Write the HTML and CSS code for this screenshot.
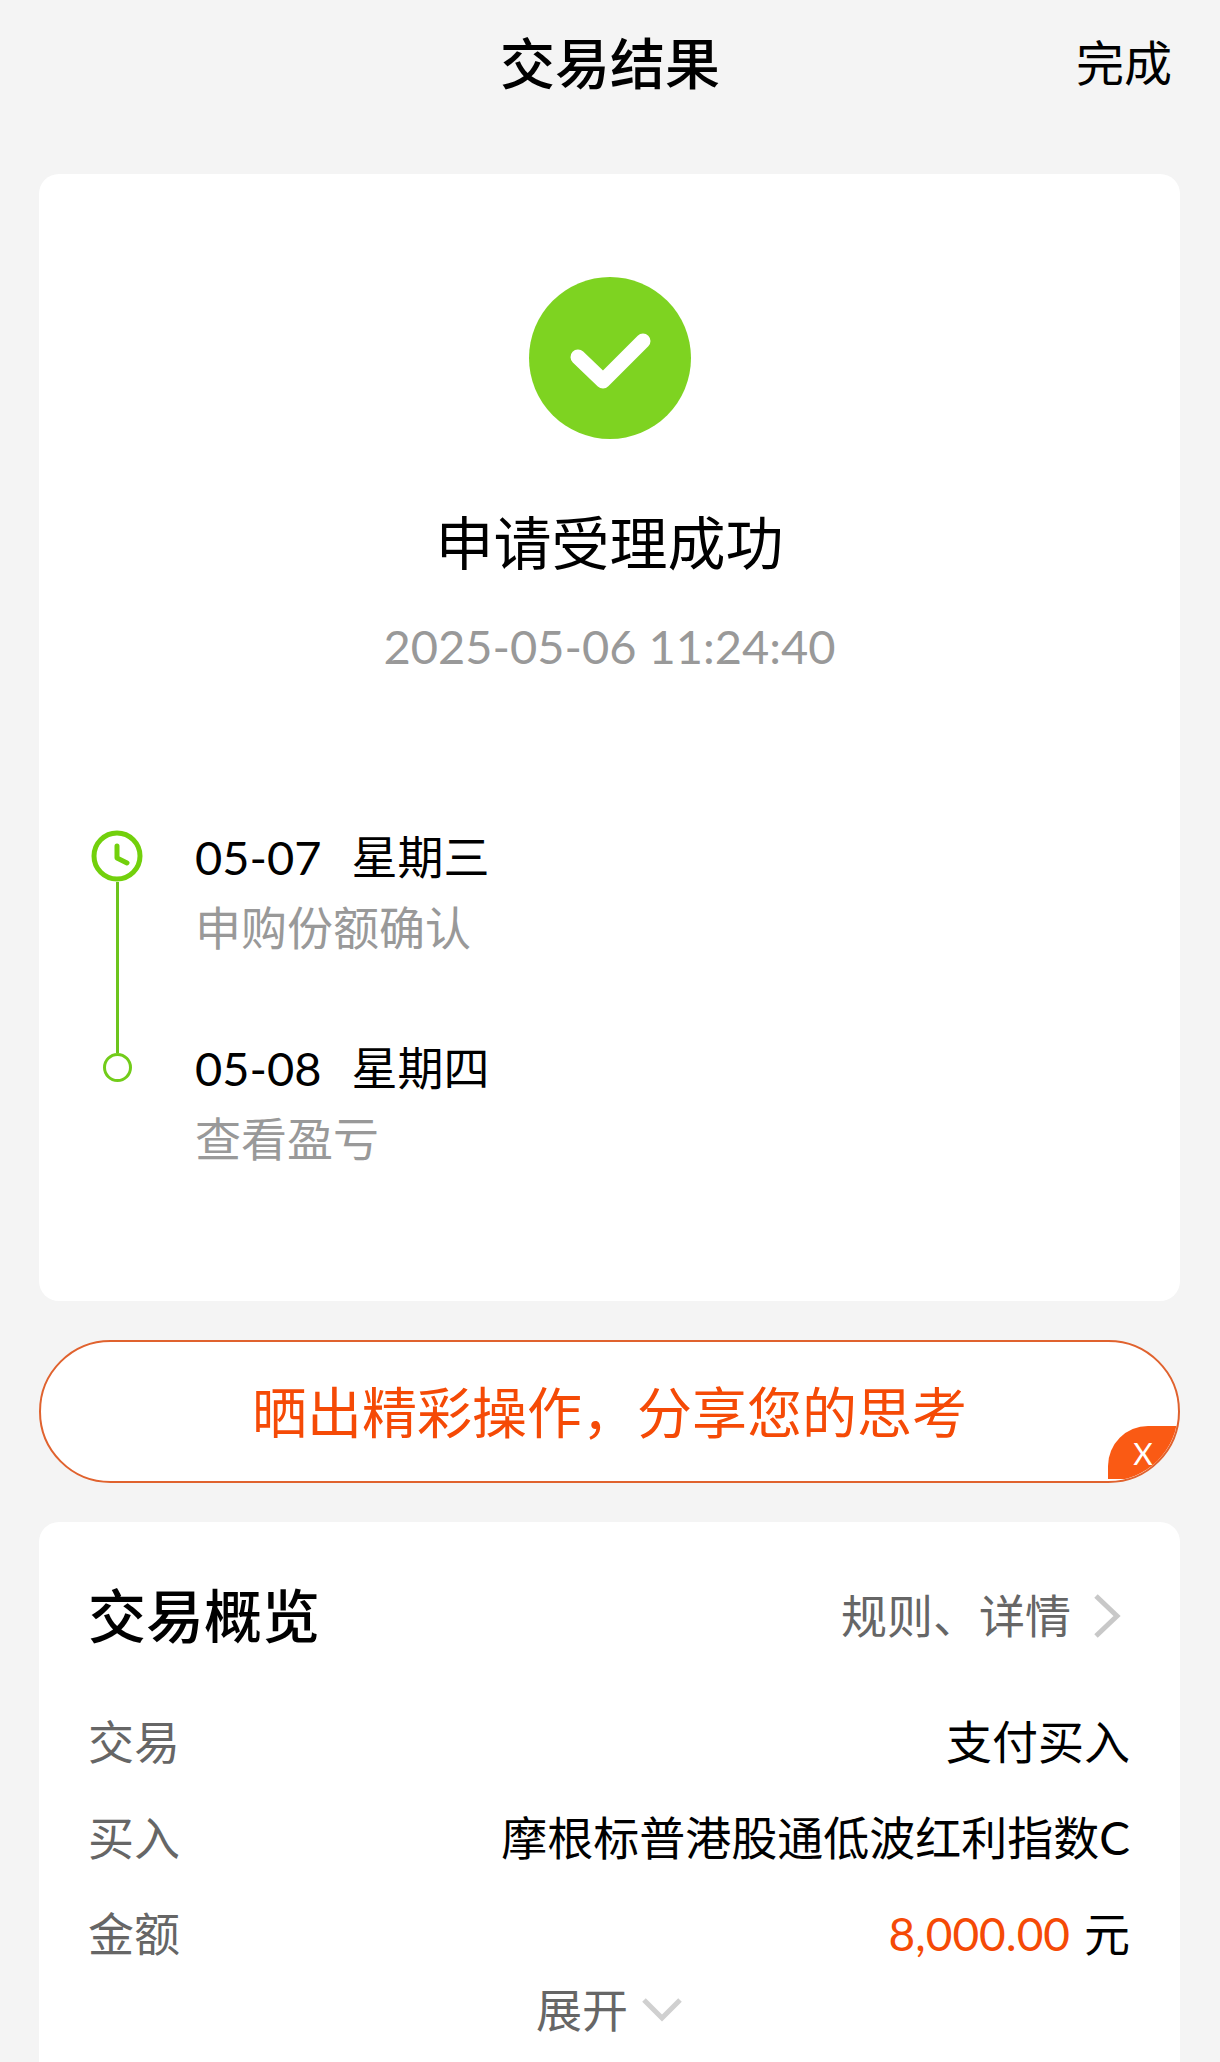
FILE: index.html
```html
<!doctype html>
<html lang="zh-CN">
<head>
<meta charset="utf-8">
<meta name="viewport" content="width=device-width">
<title>交易结果</title>
<link rel="stylesheet" href="styles.css">
</head>
<body>
<header class="topbar">
	<h1>交易结果</h1>
	<button type="button" class="done">完成</button>
</header>

<main>
	<section class="card result">
		<svg class="success" viewBox="0 0 162 162" aria-hidden="true">
			<circle cx="81" cy="81" r="81" fill="#7ed321"/>
			<path d="M49 80L74 104L114 64" fill="none" stroke="#fff" stroke-width="15" stroke-linecap="round" stroke-linejoin="round"/>
		</svg>
		<h2>申请受理成功</h2>
		<time class="stamp">2025-05-06 11:24:40</time>

		<ol class="steps">
			<li>
				<div class="marker">
					<svg class="clock" viewBox="0 0 52 52" aria-hidden="true">
						<circle cx="26" cy="26" r="23" fill="none" stroke="#72d00c" stroke-width="5"/>
						<path d="M26 16V28L36 33" fill="none" stroke="#72d00c" stroke-width="5" stroke-linecap="round" stroke-linejoin="round"/>
					</svg>
					<span class="line"></span>
				</div>
				<div>
					<p class="day"><span class="date">05-07</span><span>星期三</span></p>
					<p class="note">申购份额确认</p>
				</div>
			</li>
			<li>
				<div class="marker">
					<span class="line short"></span>
					<span class="dot"></span>
				</div>
				<div>
					<p class="day"><span class="date">05-08</span><span>星期四</span></p>
					<p class="note">查看盈亏</p>
				</div>
			</li>
		</ol>
	</section>

	<div class="share">
		<button type="button" class="share-btn">晒出精彩操作，分享您的思考</button>
		<button type="button" class="close" aria-label="关闭">X</button>
	</div>

	<section class="card overview">
		<div class="overview-head">
			<h2>交易概览</h2>
			<a href="#rules">规则、详情
				<svg class="next" viewBox="0 0 28 44" aria-hidden="true">
					<path d="M3 2L24 22L3 42" fill="none" stroke="#c8c8c8" stroke-width="5"/>
				</svg>
			</a>
		</div>
		<dl>
			<div class="row">
				<dt>交易</dt>
				<dd>支付买入</dd>
			</div>
			<div class="row">
				<dt>买入</dt>
				<dd>摩根标普港股通低波红利指数C</dd>
			</div>
			<div class="row">
				<dt>金额</dt>
				<dd><span class="amount">8,000.00</span>元</dd>
			</div>
		</dl>
		<button type="button" class="expand">展开
			<svg class="down" viewBox="0 0 40 24" aria-hidden="true">
				<path d="M2 2L20 20L38 2" fill="none" stroke="#d0d0d0" stroke-width="5"/>
			</svg>
		</button>
	</section>
</main>
</body>
</html>
```
FILE: styles.css
```css
* {
	box-sizing: border-box;
}
body {
	margin: 0;
	min-height: 100vh;
	display: flex;
	flex-direction: column;
	background-color: #f4f4f4;
	color: #000;
	font-family: Lato, "Noto Sans CJK SC", sans-serif;
	font-size: 46px;
}
h1, h2, p, ol, dl, dd {
	margin: 0;
	padding: 0;
}
button {
	border: 0;
	padding: 0;
	background: none;
	color: inherit;
	font: inherit;
	cursor: pointer;
}

/* top bar */
.topbar {
	display: grid;
	grid-template-columns: 1fr auto 1fr;
	align-items: center;
	height: 126px;
	margin-bottom: 48px;
	padding: 0 48px;
	line-height: 80px;
}
.topbar h1 {
	grid-column: 2;
	font-size: 55px;
	font-weight: 500;
}
.done {
	justify-self: end;
	font-size: 48px;
}

main {
	flex: 1;
	display: flex;
	flex-direction: column;
	gap: 39px;
	padding: 0 40px 0 39px;
}
.card {
	background-color: #fff;
	border-radius: 20px;
}

/* result card */
.result {
	display: flex;
	flex-direction: column;
	align-items: center;
	padding: 103px 50px 135px;
}
.success {
	width: 162px;
	height: 162px;
}
.result h2 {
	margin-top: 64px;
	font-size: 58px;
	font-weight: 400;
	line-height: 80px;
}
.stamp {
	margin-top: 33px;
	color: #999;
	font-size: 47px;
	line-height: 60px;
}
.steps {
	align-self: stretch;
	margin-top: 154px;
	list-style: none;
}
.steps li {
	display: flex;
	gap: 50px;
}
.steps li:first-child {
	min-height: 211px;
}
.marker {
	display: flex;
	flex-direction: column;
	align-items: center;
	width: 56px;
}
.clock {
	width: 52px;
	height: 52px;
}
.line {
	flex: 1;
	width: 3px;
	background-color: #6cc41c;
}
.line.short {
	flex: none;
	height: 12px;
}
.dot {
	width: 29px;
	height: 29px;
	border: 3px solid #72cc1a;
	border-radius: 50%;
}
.day {
	display: flex;
	gap: 30px;
	line-height: 54px;
}
.date {
	font-size: 47px;
}
.note {
	margin-top: 17px;
	color: #999;
	line-height: 54px;
}

/* share pill */
.share {
	position: relative;
	height: 143px;
	overflow: hidden;
	border: 2px solid #e0622e;
	border-radius: 72px;
	background-color: #fff;
}
.share-btn {
	width: 100%;
	height: 100%;
	color: #f54a06;
	font-size: 55px;
	line-height: 80px;
}
.close {
	position: absolute;
	right: 0;
	bottom: 2px;
	width: 70px;
	height: 53px;
	border-top-left-radius: 40px;
	background-color: #fa5a14;
	color: #fff;
	font-size: 30px;
}

/* overview card */
.overview {
	flex: 1;
	padding: 54px 50px 24px 49px;
	border-radius: 20px 20px 0 0;
}
.overview-head {
	display: flex;
	justify-content: space-between;
	align-items: center;
	margin-bottom: 38px;
	line-height: 80px;
}
.overview-head h2 {
	font-size: 58px;
	font-weight: 500;
}
.overview-head a {
	display: flex;
	align-items: center;
	gap: 22px;
	padding-right: 9px;
	color: #666;
	text-decoration: none;
}
.next {
	width: 28px;
	height: 44px;
}
.row {
	display: flex;
	justify-content: space-between;
	line-height: 96px;
}
.row dt {
	color: #666;
}
.amount {
	margin-right: 14px;
	color: #f54a06;
}
.expand {
	display: flex;
	align-items: center;
	gap: 14px;
	margin: 0 auto;
	color: #666;
	line-height: 56px;
}
.down {
	width: 40px;
	height: 24px;
}
```
